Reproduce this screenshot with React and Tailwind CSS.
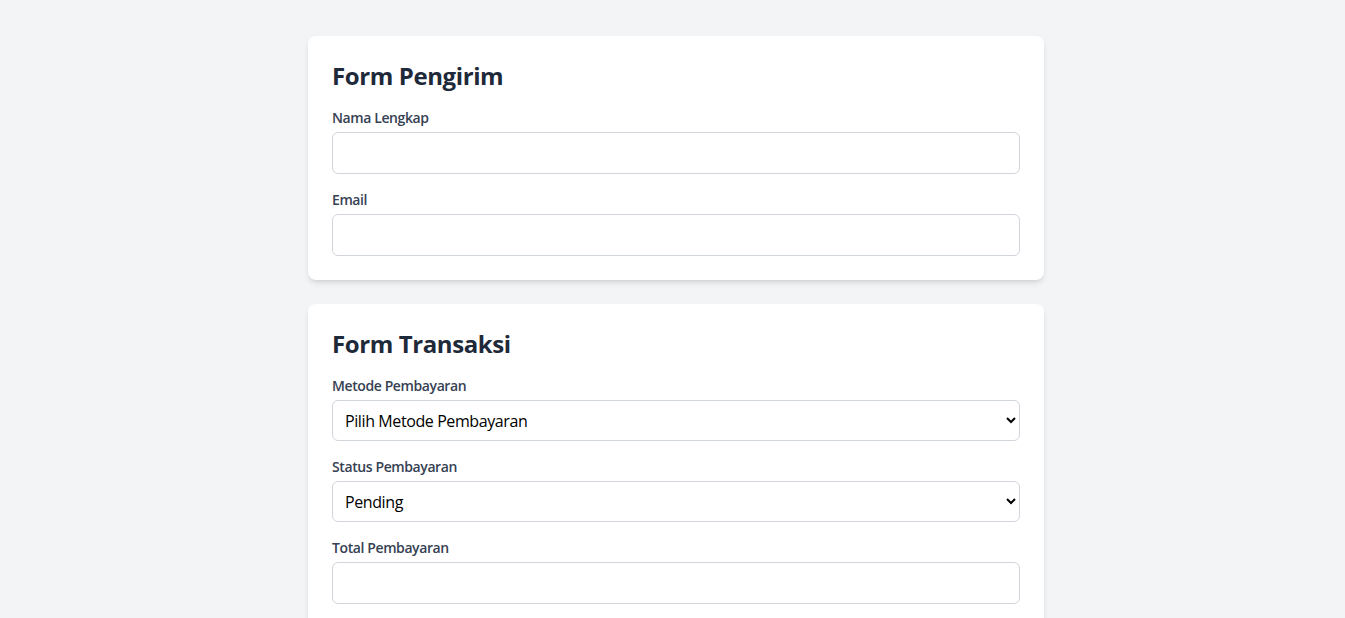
export default function App() {
  const label = "block text-sm font-semibold text-gray-700 mb-1";
  const field =
    "w-full rounded-md border border-gray-300 bg-white px-3 py-2 text-base text-black outline-none";
  const select =
    "w-full h-[41px] rounded-md border border-gray-300 bg-white pl-2 pr-2 text-base text-black outline-none";

  return (
    <div className="min-h-screen bg-gray-100 pt-9 pb-9 pl-[7px] font-['Open_Sans',sans-serif] tracking-tight">
      <div className="mx-auto w-[736px] space-y-6">
        {/* Form Pengirim */}
        <div className="rounded-lg bg-white p-6 shadow-md">
          <h2 className="mb-4 text-2xl font-bold leading-8 text-gray-800">Form Pengirim</h2>
          <div className="space-y-4">
            <div>
              <label className={label}>Nama Lengkap</label>
              <input type="text" className={field} />
            </div>
            <div>
              <label className={label}>Email</label>
              <input type="email" className={field} />
            </div>
          </div>
        </div>

        {/* Form Transaksi */}
        <div className="rounded-lg bg-white p-6 shadow-md">
          <h2 className="mb-4 text-2xl font-bold leading-8 text-gray-800">Form Transaksi</h2>
          <div className="space-y-4">
            <div>
              <label className={label}>Metode Pembayaran</label>
              <select className={select} defaultValue="">
                <option value="">Pilih Metode Pembayaran</option>
                <option value="transfer">Transfer Bank</option>
                <option value="ewallet">E-Wallet</option>
              </select>
            </div>
            <div>
              <label className={label}>Status Pembayaran</label>
              <select className={select} defaultValue="pending">
                <option value="pending">Pending</option>
                <option value="lunas">Lunas</option>
              </select>
            </div>
            <div>
              <label className={label}>Total Pembayaran</label>
              <input type="number" className={field} />
            </div>
          </div>
        </div>
      </div>
    </div>
  );
}
